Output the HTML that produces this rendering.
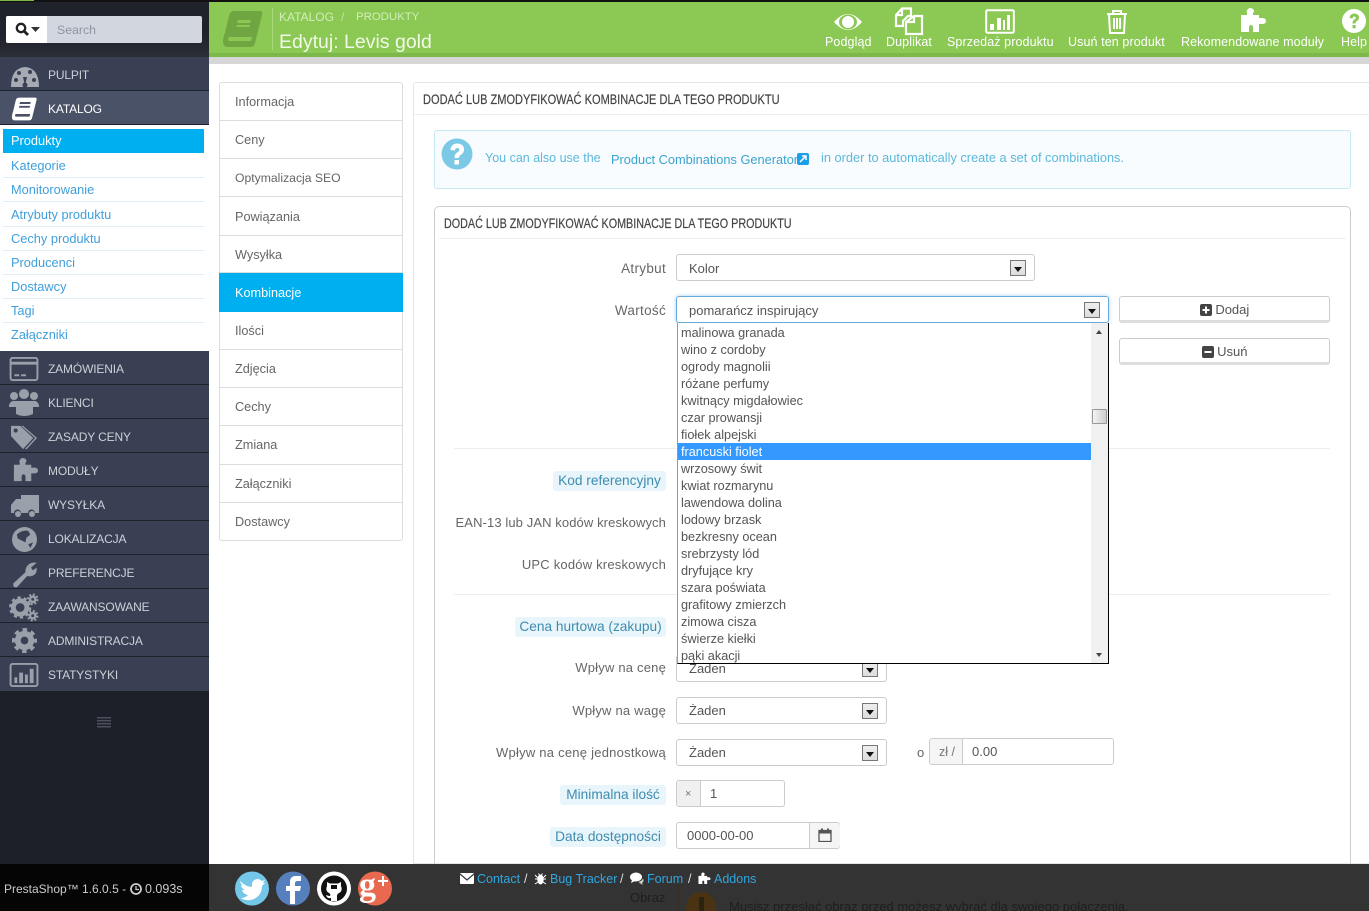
<!DOCTYPE html>
<html lang="pl"><head><meta charset="utf-8"><title>Edytuj: Levis gold</title>
<style>
html,body{margin:0;padding:0;background:#fff;overflow:hidden;width:1369px;height:911px}
body{position:relative;font-family:"Liberation Sans",sans-serif;font-size:13px;color:#555}
div,span.a,svg{position:absolute}
.t{position:absolute;white-space:nowrap;line-height:16px;height:16px}
.r{right:703px}
.m{left:0;width:209px;height:33px;background:#394053;border-bottom:1px solid #1d212b}
.m .t{left:48px;top:10px;color:#ccd0d8;font-size:12px;letter-spacing:-.15px}
.m svg{left:9px;top:4px}
.s{left:3px;width:201px;height:24px;border-bottom:1px solid #e0eef6;color:#3f9fdc;font-size:12.8px}
.s .t{left:8px;top:5px}
.tab{left:219px;width:184px;border-left:1px solid #ddd;border-right:1px solid #ddd;border-bottom:1px solid #ddd;box-sizing:border-box;color:#666;font-size:12.7px}
.tab .t{left:15px;top:50%;margin-top:-8px}
.sel{height:27px;box-sizing:border-box;border:1px solid #ccc;border-radius:3px;background:#fff}
.sel .t{left:12px;top:5px;color:#555}
.ar{top:5px;width:16px;height:16px;box-sizing:border-box;border:1px solid #777;background:linear-gradient(#eee,#ddd)}
.ar:after{content:"";position:absolute;left:3px;top:6px;border:4px solid transparent;border-top:5px solid #111;border-bottom:0}
.hint{background:#e8f5fb;color:#3f8cae;border-radius:3px;height:20px;text-align:center;line-height:19px;white-space:nowrap;font-size:13.7px}
.lb{color:#666;letter-spacing:.2px}
.it{left:0;width:413px;height:17px;line-height:19px;padding-left:3px;box-sizing:border-box;color:#555;white-space:nowrap;font-size:12.7px}
.btn{left:1119px;width:211px;height:27px;box-sizing:border-box;border:1px solid #ccc;border-bottom:3px solid #ddd;border-radius:3px;background:#fff;text-align:center;line-height:25px;color:#555}
.tb{top:34px;color:#fff;font-size:12.5px;letter-spacing:.1px}
.ft{top:871px;color:#2fa7e0;font-size:12.5px}
.w{color:#ddd}
hr{position:absolute;margin:0;border:0;height:1px;background:#eee}
</style></head><body>

<!-- top strip -->
<div style="left:0;top:0;width:1369px;height:2px;background:#111"></div>
<div style="left:0;top:0;width:34px;height:1px;background:#7cb94a"></div>

<!-- header -->
<div style="left:209px;top:2px;width:1160px;height:51px;background:#8bc954"></div>
<div style="left:209px;top:53px;width:1160px;height:4px;background:#7cb94a"></div>
<div style="left:209px;top:57px;width:1160px;height:7px;background:#d6d6d6"></div>
<svg style="left:222px;top:10px" width="42" height="38" viewBox="0 0 42 38"><path d="M12 1H38Q41 1 40 5L33 33Q32 37 28 37H6Q1 37 1 32Q1 27 3 23L7 6Q8 1 12 1Z" fill="#6fa642"/><path d="M8 27H30L29 31H8Q6 31 6 29Q6 27 8 27Z" fill="#8bc954"/><path d="M16 10H29L28 13H15ZM15 15H28L27.500 17H14.500Z" fill="#8bc954"/></svg>
<div style="left:272px;top:8px;width:1px;height:42px;background:#a9da7e"></div>
<span class="t" style="left:279px;top:9px;color:#d4ecbd;font-size:12px">KATALOG</span>
<span class="t" style="left:341px;top:9px;color:#c3e3a6;font-size:12px">/</span>
<span class="t" style="left:356px;top:9px;color:#d4ecbd;font-size:11.4px">PRODUKTY</span>
<span class="t" style="left:279px;top:33px;color:#f1f9e8;font-size:19.5px;line-height:18px;height:18px">Edytuj: Levis gold</span>

<svg style="left:833px;top:12px" width="30" height="20" viewBox="0 0 30 20"><path d="M1 10Q15 -6 29 10Q15 26 1 10Z" fill="#fff"/><ellipse cx="15" cy="10" rx="9" ry="7.500" fill="#8bc954"/><circle cx="15" cy="10" r="6" fill="#fff"/></svg>
<svg style="left:894px;top:7px" width="30" height="29" viewBox="0 0 30 29" fill="none" stroke="#fff" stroke-width="2.200"><path d="M8 1.500H17V9H14L9 14V19H2V8ZM8 1.500V8H2"/><path d="M20 9H28V27H12V15ZM20 9V15H12"/></svg>
<svg style="left:985px;top:9px" width="30" height="25" viewBox="0 0 30 25"><rect x="1.200" y="1.200" width="27.600" height="22.600" rx="1.500" fill="none" stroke="#fff" stroke-width="2"/><path d="M5 15h4v6H5zM12 9h4v12h-4zM18 11h2v10h-2zM22 6h3v15h-3z" fill="#fff"/></svg>
<svg style="left:1105px;top:9px" width="24" height="26" viewBox="0 0 24 26" fill="none" stroke="#fff" stroke-width="2"><path d="M2 5H22M8 5V2H16V5M4 5L5 24H19L20 5M9 9V20M12 9V20M15 9V20"/></svg>
<svg style="left:1238px;top:7px" width="29" height="27" viewBox="0 0 29 27"><path d="M9 8H3V25H11V21Q11 18 13 18Q15 18 15 21V25H21V17H24Q28 17 28 14Q28 11 24 11H21V8H15V6Q17 4 15 2Q12 0 10 2Q8 4 9 6Z" fill="#fff"/></svg>
<svg style="left:1342px;top:9px" width="24" height="24" viewBox="0 0 24 24"><circle cx="12" cy="12" r="12" fill="#fff"/><path d="M7.500 9Q8 4.500 12.500 4.500Q17 5 17 8.500Q17 11 14.500 12.300Q13.500 13 13.500 14.500H10.500Q10.300 11.800 12.500 10.500Q14 9.500 13.800 8.500Q13.500 7.500 12.300 7.500Q10.800 7.500 10.500 9.500ZM10.500 16H13.700V19.200H10.500Z" fill="#8bc954"/></svg>

<span class="t tb" style="left:825px">Podgląd</span>
<span class="t tb" style="left:886px">Duplikat</span>
<span class="t tb" style="left:947px">Sprzedaż produktu</span>
<span class="t tb" style="left:1068px">Usuń ten produkt</span>
<span class="t tb" style="left:1181px">Rekomendowane moduły</span>
<span class="t tb" style="left:1341px">Help</span>

<!-- sidebar -->
<div style="left:0;top:2px;width:209px;height:862px;background:#1d2029"></div>
<div style="left:0;top:2px;width:209px;height:55px;background:linear-gradient(#1f222b 60%,#2b2e37)"></div>
<div style="left:6px;top:16px;width:196px;height:27px;background:#d2d7df;border-radius:2px"></div>
<div style="left:6px;top:16px;width:41px;height:27px;background:#fff;border-radius:2px 0 0 2px"></div>
<svg style="left:15px;top:22px" width="26" height="15" viewBox="0 0 26 15"><circle cx="6" cy="6" r="4.200" fill="none" stroke="#222" stroke-width="2.300"/><path d="M9 9L13 13" stroke="#222" stroke-width="2.800"/><path d="M16 5H25L20.500 10Z" fill="#333"/></svg>
<span class="t" style="left:57px;top:22px;color:#8f95a0;font-size:12.300px">Search</span>

<div class="m" style="top:57px"><svg width="30" height="24" viewBox="0 0 30 24" style="left:10px;top:8px"><path d="M1 22Q1 3 15 2Q29 3 29 22Z" fill="#a6abb3"/><path d="M15 21L13 12L17 12Z" fill="#394053"/><circle cx="15" cy="20" r="2.500" fill="#394053"/><circle cx="6" cy="15" r="2" fill="#394053"/><circle cx="9" cy="8" r="2" fill="#394053"/><circle cx="20" cy="7" r="2" fill="#394053"/><circle cx="24" cy="15" r="2" fill="#394053"/></svg><span class="t">PULPIT</span></div>
<div class="m" style="top:91px;background:#4a5268"><svg width="27" height="24" viewBox="0 0 42 38" style="left:11px;top:6px"><path d="M12 1H38Q41 1 40 5L33 33Q32 37 28 37H6Q1 37 1 32Q1 27 3 23L7 6Q8 1 12 1Z" fill="#fff"/><path d="M8 27H30L29 31H8Q6 31 6 29Q6 27 8 27Z" fill="#4a5268"/><path d="M14 8H31L30 11H13ZM13 14H30L29 17H12Z" fill="#4a5268"/></svg><span class="t" style="color:#fff">KATALOG</span></div>

<div style="left:0;top:125px;width:209px;height:226px;background:#fff"></div>
<div style="left:3px;top:129px;width:201px;height:24px;background:#00aff0"><span class="t" style="left:8px;top:4px;color:#fff;font-size:12.800px">Produkty</span></div>
<div class="s" style="top:153px"><span class="t">Kategorie</span></div>
<div class="s" style="top:177px"><span class="t">Monitorowanie</span></div>
<div class="s" style="top:202px"><span class="t">Atrybuty produktu</span></div>
<div class="s" style="top:226px"><span class="t">Cechy produktu</span></div>
<div class="s" style="top:250px"><span class="t">Producenci</span></div>
<div class="s" style="top:274px"><span class="t">Dostawcy</span></div>
<div class="s" style="top:298px"><span class="t">Tagi</span></div>
<div class="s" style="top:322px;border:0"><span class="t">Załączniki</span></div>

<div class="m" style="top:351px"><svg width="30" height="24" viewBox="0 0 30 25" style="top:6px"><rect x="1" y="1" width="28" height="23" rx="2" fill="none" stroke="#9aa0a9" stroke-width="2"/><path d="M2 5H28V8H2ZM5 18H10V20H5ZM12 18H17V20H12Z" fill="#9aa0a9"/></svg><span class="t">ZAMÓWIENIA</span></div>
<div class="m" style="top:385px"><svg width="30" height="27" viewBox="0 0 30 27" style="top:4px"><circle cx="5" cy="7" r="4" fill="#9aa0a9"/><circle cx="15" cy="5" r="5" fill="#9aa0a9"/><circle cx="25" cy="7" r="4" fill="#9aa0a9"/><path d="M0 16Q2 11 6 12H24Q28 11 30 16V18H24V25Q15 29 7 25V18H0Z" fill="#9aa0a9"/></svg><span class="t">KLIENCI</span></div>
<div class="m" style="top:419px"><svg width="30" height="25" viewBox="0 0 30 27" style="top:6px"><path d="M1 1H11L25 14L14 26L1 12ZM14 1L29 14L18 26L16 26L27 14L12 1Z" fill="#9aa0a9"/><circle cx="6" cy="6" r="2.200" fill="#394053"/></svg><span class="t">ZASADY CENY</span></div>
<div class="m" style="top:453px"><svg width="28" height="26" viewBox="0 0 29 27" style="left:11px;top:4px"><path d="M9 8H3V25H11V21Q11 18 13 18Q15 18 15 21V25H21V17H24Q28 17 28 14Q28 11 24 11H21V8H15V6Q17 4 15 2Q12 0 10 2Q8 4 9 6Z" fill="#9aa0a9"/></svg><span class="t">MODUŁY</span></div>
<div class="m" style="top:487px"><svg width="28" height="23" viewBox="0 0 28 23" style="left:11px;top:8px"><path d="M10 0H28V18H24A3.500 3.500 0 0 0 17 18H10A3.500 3.500 0 0 0 3 18H0V10L5 4H10Z" fill="#9aa0a9"/><circle cx="7" cy="19" r="3" fill="#9aa0a9"/><circle cx="21" cy="19" r="3" fill="#9aa0a9"/></svg><span class="t">WYSYŁKA</span></div>
<div class="m" style="top:521px"><svg width="25" height="25" viewBox="0 0 26 26" style="left:12px;top:6px"><circle cx="13" cy="13" r="13" fill="#9aa0a9"/><path d="M5 8Q10 3 17 4L19 8L15 11L14 16L10 14L6 12ZM17 18L22 16L19 22Z" fill="#394053"/></svg><span class="t">LOKALIZACJA</span></div>
<div class="m" style="top:555px"><svg width="27" height="26" viewBox="0 0 28 28" style="left:11px;top:7px"><path d="M2 23L15 11Q15 3 22 1Q25 0 27 1L21 6L23 9L27 6Q28 13 22 15Q19 16 17 15L6 27Q3 28 2 26Z" fill="#9aa0a9"/></svg><span class="t">PREFERENCJE</span></div>
<div class="m" style="top:589px"><svg width="31" height="29" viewBox="0 0 31 30" style="top:4px"><circle cx="11" cy="15" r="7" fill="none" stroke="#9aa0a9" stroke-width="5"/><circle cx="11" cy="15" r="10" fill="none" stroke="#9aa0a9" stroke-width="3" stroke-dasharray="3.300 3"/><circle cx="24" cy="6.500" r="2.800" fill="none" stroke="#9aa0a9" stroke-width="2.600"/><circle cx="24" cy="6.500" r="5" fill="none" stroke="#9aa0a9" stroke-width="2" stroke-dasharray="2 1.930"/><circle cx="24" cy="23.500" r="2.800" fill="none" stroke="#9aa0a9" stroke-width="2.600"/><circle cx="24" cy="23.500" r="5" fill="none" stroke="#9aa0a9" stroke-width="2" stroke-dasharray="2 1.930"/></svg><span class="t">ZAAWANSOWANE</span></div>
<div class="m" style="top:623px"><svg width="25" height="25" viewBox="0 0 26 26" style="left:12px;top:5px"><circle cx="13" cy="13" r="7" fill="none" stroke="#9aa0a9" stroke-width="6"/><circle cx="13" cy="13" r="11" fill="none" stroke="#9aa0a9" stroke-width="4" stroke-dasharray="4.600 4.040" stroke-dashoffset="2.300"/></svg><span class="t">ADMINISTRACJA</span></div>
<div class="m" style="top:657px;border:0;height:34px"><svg width="30" height="24" viewBox="0 0 30 25" style="top:6px"><rect x="1" y="1" width="28" height="23" rx="2" fill="none" stroke="#9aa0a9" stroke-width="2"/><path d="M5 15h3v6H5zM10 10h4v11h-4zM16 12h3v9h-3zM21 6h4v15h-4z" fill="#9aa0a9"/></svg><span class="t">STATYSTYKI</span></div>
<div style="left:97px;top:717px;width:14px;height:11px;background:repeating-linear-gradient(#4c515c 0 1.500px,transparent 1.500px 3px)"></div>

<!-- tabs -->
<div class="tab" style="top:82px;height:39px;border-top:1px solid #ddd;border-radius:3px 3px 0 0"><span class="t">Informacja</span></div>
<div class="tab" style="top:121px;height:38px"><span class="t">Ceny</span></div>
<div class="tab" style="top:159px;height:38px"><span class="t" style="font-size:12.200px">Optymalizacja SEO</span></div>
<div class="tab" style="top:197px;height:39px"><span class="t" style="margin-top:-7px">Powiązania</span></div>
<div class="tab" style="top:236px;height:37px"><span class="t" style="margin-top:-7px">Wysyłka</span></div>
<div class="tab" style="top:273px;height:39px;background:#00aff0;border-color:#00aff0;color:#fff"><span class="t" style="margin-top:-7px">Kombinacje</span></div>
<div class="tab" style="top:312px;height:38px"><span class="t">Ilości</span></div>
<div class="tab" style="top:350px;height:38px"><span class="t">Zdjęcia</span></div>
<div class="tab" style="top:388px;height:38px"><span class="t">Cechy</span></div>
<div class="tab" style="top:426px;height:39px"><span class="t">Zmiana</span></div>
<div class="tab" style="top:465px;height:38px"><span class="t">Załączniki</span></div>
<div class="tab" style="top:503px;height:38px;border-radius:0 0 3px 3px"><span class="t">Dostawcy</span></div>

<!-- outer panel -->
<div style="left:413px;top:82px;width:960px;height:782px;box-sizing:border-box;border:1px solid #e6e6e6;border-radius:3px 0 0 0"></div>
<span class="t" style="left:423px;top:91px;font-size:14px;color:#444;-webkit-text-stroke:.2px #444;transform:scaleX(.789);transform-origin:0 50%">DODAĆ LUB ZMODYFIKOWAĆ KOMBINACJE DLA TEGO PRODUKTU</span>
<hr style="left:414px;top:114px;width:955px">

<!-- alert -->
<div style="left:434px;top:130px;width:917px;height:59px;box-sizing:border-box;background:#f8fcfe;border:1px solid #c8e8f4;border-radius:3px"></div>
<svg style="left:441px;top:138px" width="32" height="32" viewBox="0 0 32 32"><circle cx="16" cy="16" r="15.500" fill="#7cc9e6"/><path d="M9.500 12Q10 5.500 16.500 5.500Q23 6 23 11.500Q23 15 19.500 17Q18 18 18 20H13.500Q13.300 16 16.500 14.300Q18.500 13 18.300 11.500Q18 10 16.300 10Q14.300 10 14 12.500ZM13.500 22H18V26.500H13.500Z" fill="#fff"/></svg>
<span class="t" style="left:485px;top:150px;color:#5cb8da;font-size:12.500px">You can also use the</span>
<span class="t" style="left:611px;top:152px;color:#3ba3cf;font-size:12.800px">Product Combinations Generator</span>
<div style="left:797px;top:153px;width:12px;height:12px;background:#1b9fe8;border-radius:2px"></div>
<svg style="left:799px;top:155px" width="8" height="8" viewBox="0 0 8 8"><path d="M1 7L6 2M3 1H7V5" stroke="#fff" stroke-width="1.500" fill="none"/></svg>
<span class="t" style="left:821px;top:150px;color:#5cb8da;font-size:12.800px">in order to automatically create a set of combinations.</span>

<!-- inner panel -->
<div style="left:434px;top:206px;width:917px;height:658px;box-sizing:border-box;border:1px solid #ccc;border-bottom:0;border-radius:5px 5px 0 0"></div>
<span class="t" style="left:444px;top:215px;font-size:14px;color:#444;-webkit-text-stroke:.2px #444;transform:scaleX(.769);transform-origin:0 50%">DODAĆ LUB ZMODYFIKOWAĆ KOMBINACJE DLA TEGO PRODUKTU</span>
<hr style="left:439px;top:238px;width:907px">

<span class="t r lb" style="top:261px;font-size:13.500px;letter-spacing:.3px">Atrybut</span>
<div class="sel" style="left:676px;top:254px;width:359px"><span class="t" style="top:6px">Kolor</span><div class="ar" style="left:333px"></div></div>
<span class="t r lb" style="top:303px;font-size:13.500px;letter-spacing:.3px">Wartość</span>
<div class="sel" style="left:676px;top:296px;width:433px;border-color:#6aa9d8;box-shadow:0 0 4px #a9d2f0"><span class="t" style="top:6px">pomarańcz inspirujący</span><div class="ar" style="left:407px"></div></div>

<div class="btn" style="top:296px"><svg style="position:static;vertical-align:-2px" width="12" height="12" viewBox="0 0 12 12"><rect width="12" height="12" rx="2" fill="#444"/><path d="M5 2.500H7V5H9.500V7H7V9.500H5V7H2.500V5H5Z" fill="#fff"/></svg> Dodaj</div>
<div class="btn" style="top:338px"><svg style="position:static;vertical-align:-2px" width="12" height="12" viewBox="0 0 12 12"><rect width="12" height="12" rx="2" fill="#444"/><path d="M2.500 5H9.500V7H2.500Z" fill="#fff"/></svg> Usuń</div>

<hr style="left:454px;top:448px;width:876px">
<div class="hint" style="left:553px;top:471px;width:113px">Kod referencyjny</div>
<span class="t r lb" style="top:515px;letter-spacing:.1px">EAN-13 lub JAN kodów kreskowych</span>
<span class="t r lb" style="top:557px;letter-spacing:.2px">UPC kodów kreskowych</span>
<hr style="left:454px;top:594px;width:876px">
<div class="hint" style="left:515px;top:617px;width:151px">Cena hurtowa (zakupu)</div>
<span class="t r lb" style="top:660px">Wpływ na cenę</span>
<div class="sel" style="left:676px;top:655px;width:211px"><span class="t" style="top:5px">Żaden</span><div class="ar" style="left:185px"></div></div>
<span class="t r lb" style="top:703px">Wpływ na wagę</span>
<div class="sel" style="left:676px;top:697px;width:211px"><span class="t">Żaden</span><div class="ar" style="left:185px"></div></div>
<span class="t r lb" style="top:745px;letter-spacing:.24px">Wpływ na cenę jednostkową</span>
<div class="sel" style="left:676px;top:739px;width:211px"><span class="t">Żaden</span><div class="ar" style="left:185px"></div></div>
<span class="t" style="left:917px;top:745px;color:#666">o</span>
<div class="sel" style="left:929px;top:738px;width:185px"><div style="left:0;top:0;width:32px;height:25px;background:#f5f5f5;border-right:1px solid #ccc;border-radius:3px 0 0 3px"></div><span class="t" style="left:9px;font-size:12.500px;color:#777">zł /</span><span class="t" style="left:42px">0.00</span></div>
<div class="hint" style="left:560px;top:785px;width:106px">Minimalna ilość</div>
<div class="sel" style="left:676px;top:780px;width:109px"><div style="left:0;top:0;width:23px;height:25px;background:#f0f0f0;border-right:1px solid #ccc;border-radius:3px 0 0 3px"></div><span class="t" style="left:8px;font-size:11px;color:#777">×</span><span class="t" style="left:33px">1</span></div>
<div class="hint" style="left:550px;top:827px;width:116px">Data dostępności</div>
<div class="sel" style="left:676px;top:822px;width:164px"><span class="t" style="left:10px">0000-00-00</span><div style="left:132px;top:0;width:30px;height:25px;background:#f5f5f5;border-left:1px solid #ccc;border-radius:0 3px 3px 0"></div><svg style="left:141px;top:5px" width="14" height="14" viewBox="0 0 14 14"><path d="M1 2.500H13V13.500H1Z" fill="none" stroke="#555" stroke-width="1.300"/><path d="M1 2.500H13V5.500H1ZM3 0.500H5V3H3ZM9 0.500H11V3H9Z" fill="#555"/></svg></div>

<!-- dropdown -->
<div style="left:677px;top:323px;width:432px;height:341px;box-sizing:border-box;background:#fff;border-left:1px solid #999;border-right:1px solid #000;border-bottom:1px solid #000;overflow:hidden">
<div class="it" style="top:1px">malinowa granada</div>
<div class="it" style="top:18px">wino z cordoby</div>
<div class="it" style="top:35px">ogrody magnolii</div>
<div class="it" style="top:52px">różane perfumy</div>
<div class="it" style="top:69px">kwitnący migdałowiec</div>
<div class="it" style="top:86px">czar prowansji</div>
<div class="it" style="top:103px">fiołek alpejski</div>
<div class="it" style="top:120px;background:#3399ff;color:#fff">francuski fiolet</div>
<div class="it" style="top:137px">wrzosowy świt</div>
<div class="it" style="top:154px">kwiat rozmarynu</div>
<div class="it" style="top:171px">lawendowa dolina</div>
<div class="it" style="top:188px">lodowy brzask</div>
<div class="it" style="top:205px">bezkresny ocean</div>
<div class="it" style="top:222px">srebrzysty lód</div>
<div class="it" style="top:239px">dryfujące kry</div>
<div class="it" style="top:256px">szara poświata</div>
<div class="it" style="top:273px">grafitowy zmierzch</div>
<div class="it" style="top:290px">zimowa cisza</div>
<div class="it" style="top:307px">świerze kiełki</div>
<div class="it" style="top:324px">pąki akacji</div>
<div style="left:413px;top:0;width:17px;height:340px;background:#f0f0f0"></div>
<div style="left:414px;top:86px;width:15px;height:15px;box-sizing:border-box;border:1px solid #999;border-radius:1px;background:linear-gradient(90deg,#f4f4f4,#ccc)"></div>
<div style="left:418px;top:7px;border:3.500px solid transparent;border-bottom:4px solid #444;border-top:0"></div>
<div style="left:418px;top:330px;border:3.500px solid transparent;border-top:4px solid #444;border-bottom:0"></div>
</div>

<!-- footer -->
<div style="left:209px;top:864px;width:1160px;height:47px;background:#333"></div>
<div style="left:0;top:864px;width:209px;height:47px;background:#050505"></div>
<span class="t" style="left:4px;top:881px;color:#ccc;font-size:12px">PrestaShop™ 1.6.0.5 - </span>
<svg style="left:130px;top:883px" width="12" height="12" viewBox="0 0 12 12"><circle cx="6" cy="6" r="5" fill="none" stroke="#ccc" stroke-width="1.800"/><path d="M6 3V6.500H9" stroke="#ccc" stroke-width="1.300" fill="none"/></svg>
<span class="t" style="left:145px;top:881px;color:#ccc;font-size:12.500px">0.093s</span>

<svg style="left:235px;top:871px" width="158" height="35" viewBox="0 0 158 35">
<circle cx="17" cy="17.500" r="17" fill="#74c7e8"/><path d="M5 10Q11 16 17 16Q16 9 22 8Q25 8 27 10L30 9L28 12L30 12L27 15Q27 24 19 28Q12 31 6 27Q10 27 13 24Q8 23 7 19H10Q6 17 6 14L8 15Q5 12 5 10Z" fill="#fff"/>
<circle cx="58" cy="17.500" r="17" fill="#5580bd"/><path d="M55 33V20H51V15H55V11Q55 5 61 5H66V10H63Q60 10 60 12V15H66L65 20H60V33Z" fill="#fff"/>
<circle cx="99" cy="17.500" r="17" fill="#fff"/><circle cx="99" cy="17.500" r="13" fill="#111"/><path d="M92 11L95 12.500H103L106 11V15Q108 20 104 22Q102 23 102 25V30H96V27Q92 28 91 24Q93 25 95 25Q96 23 94 22Q90 20 92 15Z" fill="#fff"/><path d="M96 14H102V18H96Z" fill="#111"/>
<circle cx="140" cy="17.500" r="17" fill="#e8694f"/><text x="124" y="25" font-family="Liberation Serif,serif" font-size="34" font-weight="bold" fill="#fff">g</text><path d="M143 9H147V5H149V9H153V11H149V15H147V11H143Z" fill="#fff"/>
</svg>

<svg style="left:460px;top:873px" width="14" height="11" viewBox="0 0 14 11"><rect width="14" height="11" rx="1" fill="#fff"/><path d="M0 1L7 7L14 1" fill="none" stroke="#333" stroke-width="1.200"/></svg>
<span class="t ft" style="left:477px">Contact</span><span class="t ft w" style="left:524px">/</span>
<svg style="left:534px;top:872px" width="13" height="13" viewBox="0 0 13 13"><ellipse cx="6.500" cy="7.500" rx="3.200" ry="5" fill="#fff"/><path d="M1 3L4 6M12 3L9 6M1 7H4M12 7H9M1 12L4 10M12 12L9 10M4.500 1.500L5.500 3M8.500 1.500L7.500 3" stroke="#fff"/></svg>
<span class="t ft" style="left:550px">Bug Tracker</span><span class="t ft w" style="left:620px">/</span>
<svg style="left:630px;top:872px" width="14" height="13" viewBox="0 0 14 13"><ellipse cx="6" cy="5" rx="6" ry="4.500" fill="#fff"/><path d="M2 8L1 11L5 9Z" fill="#fff"/><path d="M9 9.500Q12 9 13 6.500Q14.500 9.500 12 11L13 13L9.500 11Z" fill="#ccc"/></svg>
<span class="t ft" style="left:647px">Forum</span><span class="t ft w" style="left:688px">/</span>
<svg style="left:697px;top:872px" width="14" height="13" viewBox="0 0 29 27"><path d="M9 8H3V25H11V21Q11 18 13 18Q15 18 15 21V25H21V17H24Q28 17 28 14Q28 11 24 11H21V8H15V6Q17 4 15 2Q12 0 10 2Q8 4 9 6Z" fill="#fff"/></svg>
<span class="t ft" style="left:714px">Addons</span>

<span class="t" style="left:630px;top:890px;color:#1e1e1e">Obraz</span>
<div style="left:677px;top:884px;width:2px;height:27px;background:#3b3020"></div>
<div style="left:686px;top:892px;width:30px;height:19px;border-radius:15px 15px 0 0;background:#4a3312"></div>
<div style="left:699px;top:897px;width:5px;height:14px;background:#2b2412"></div>
<span class="t" style="left:729px;top:899px;color:#1e1e1e">Musisz przesłać obraz przed możesz wybrać dla swojego połączenia.</span>
</body></html>
